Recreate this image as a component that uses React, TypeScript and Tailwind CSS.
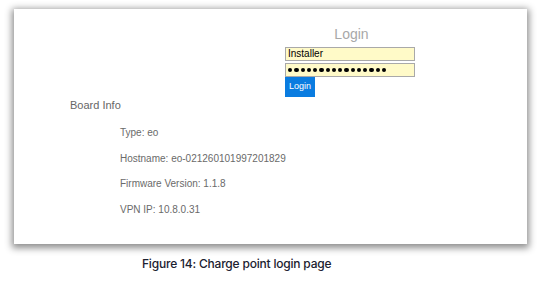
import React from "react";

export default function App() {
  const dots = Array.from({ length: 16 });
  return (
    <div className="w-[548px] h-[282px] bg-white overflow-hidden" style={{ fontFamily: '"Liberation Sans", Arial, sans-serif' }}>
      <div className="pt-[9px] pl-[14px]">
        <div className="w-[513px] h-[235px] bg-white shadow-[0_2px_7px_2px_rgba(0,0,0,0.45)] flex flex-col">
          <div className="ml-[271px] mt-[17px] w-[130px] flex flex-col">
            <div className="text-[14px] leading-[16px] text-[#a8a8a8] text-center pl-[3px]">Login</div>
            <div className="mt-[5px] h-[14px] border border-[#a9a9a9] bg-[#fffac8] flex items-center px-[2px] text-[10px] leading-none text-black">
              Installer
            </div>
            <div className="mt-[2px] h-[14px] border border-[#a9a9a9] bg-[#fffac8] flex items-center px-[2px] gap-[2px]">
              {dots.map((_, i) => (
                <div key={i} className="w-[4.25px] h-[4.25px] rounded-full bg-black" />
              ))}
            </div>
            <div className="w-[30px] h-[20px] bg-[#0a7ce0] text-white text-[9px] flex items-center justify-center">
              Login
            </div>
          </div>
          <div className="ml-[56px] mt-[2px] text-[11px] leading-[13px] text-[#666]">Board Info</div>
          <div className="ml-[106px] mt-[15px] flex flex-col gap-[13px] text-[10px] leading-[12.5px] text-[#6a6a6a]">
            <div>Type: eo</div>
            <div>Hostname: eo-021260101997201829</div>
            <div>Firmware Version: 1.1.8</div>
            <div>VPN IP: 10.8.0.31</div>
          </div>
        </div>
      </div>
      <div
        className="ml-[142px] mt-[13px] text-[12px] leading-[14px] font-medium text-[#1b2130] tracking-[-0.2px]"
        style={{ fontFamily: 'Inter, "Noto Sans", sans-serif' }}
      >
        Figure 14: Charge point login page
      </div>
    </div>
  );
}
